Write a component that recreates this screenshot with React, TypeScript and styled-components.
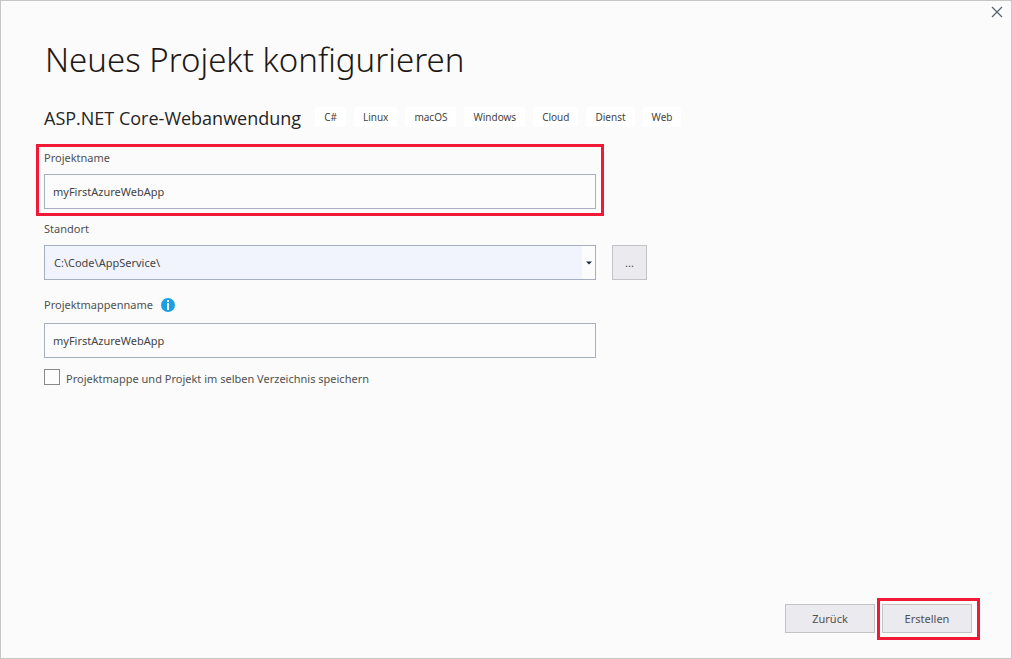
import React, { useState } from "react";
import styled, { createGlobalStyle } from "styled-components";

const GlobalStyle = createGlobalStyle`
  *, *::before, *::after { box-sizing: border-box; }
  body {
    margin: 0;
    background: #fbfbfb;
    color: #505050;
    font-family: "Noto Sans", "Open Sans", sans-serif;
    font-size: 11px;
    line-height: 16px;
  }
  button, input { font: inherit; color: inherit; }
`;

const Dialog = styled.main`
  display: flex;
  flex-direction: column;
  min-height: 100vh;
  border: 1px solid #c6c6c6;
  background: #fbfbfb;
`;

const TitleBar = styled.div`
  display: flex;
  justify-content: flex-end;
  padding: 3px 6px 0 0;
`;

const CloseButton = styled.button`
  display: flex;
  align-items: center;
  justify-content: center;
  width: 16px;
  height: 16px;
  padding: 0;
  border: 0;
  background: none;
  color: #5b6478;
`;

const Title = styled.h1`
  margin: 0;
  padding: 18px 44px 0;
  color: #1e1815;
  font-size: 33px;
  font-weight: 300;
  line-height: 44px;
`;

const TemplateRow = styled.div`
  display: flex;
  flex-wrap: wrap;
  align-items: center;
  gap: 14px;
  padding: 22px 43px 12px;
`;

const TemplateName = styled.h2`
  margin: 0;
  color: #252525;
  font-family: "Open Sans", "Noto Sans", sans-serif;
  font-size: 18px;
  font-weight: 400;
  line-height: 28px;
`;

const Tags = styled.ul`
  display: flex;
  flex-wrap: wrap;
  gap: 8px;
  margin: 0 0 2px;
  padding: 0;
  list-style: none;
`;

const Tag = styled.li`
  padding: 2px 9px;
  border-radius: 3px;
  background: #fff;
  color: #444;
  font-size: 10px;
`;

const Form = styled.form`
  display: flex;
  flex: 1;
  flex-direction: column;
`;

const Fields = styled.div`
  display: flex;
  flex-direction: column;
  padding: 0 35px;
`;

const Field = styled.div<{ $marked?: boolean }>`
  display: flex;
  flex-direction: column;
  gap: 8px;
  width: 100%;
  max-width: 568px;
  padding: 3px 5px 4px;
  border: 3px solid ${(p) => (p.$marked ? "#f11a36" : "transparent")};
`;

const LocationRow = styled.div`
  display: flex;
  align-items: flex-end;
  gap: 8px;
  margin-top: -1px;
`;

const LabelRow = styled.div`
  display: flex;
  align-items: center;
  gap: 8px;
  min-height: 16px;
`;

const SolutionField = styled(Field)`
  padding-top: 5px;

  ${LabelRow} { min-height: 20px; }
`;

const TextInput = styled.input`
  width: 100%;
  height: 35px;
  padding: 0 8px;
  border: 1px solid #a5afbf;
  border-radius: 0;
  background: #fcfcfc;
  color: #444;
  outline: 0;
`;

const Combo = styled.div`
  display: flex;
  height: 35px;
  border: 1px solid #a5afbf;
  background: #fcfcfc;
`;

const ComboInput = styled.input`
  flex: 1;
  min-width: 0;
  padding: 0 9px;
  border: 0;
  background: #f1f4fd;
  color: #444;
  outline: 0;
`;

const ComboToggle = styled.button`
  display: flex;
  align-items: center;
  justify-content: center;
  width: 13px;
  padding: 0;
  border: 0;
  background: none;
  color: #1e2940;
`;

const Button = styled.button`
  width: 90px;
  height: 29px;
  padding: 0;
  border: 1px solid #c3c3c5;
  background: #ebeaef;
  color: #505050;
`;

const BrowseButton = styled(Button)`
  width: 35px;
  height: 35px;
  margin-bottom: 7px;
`;

const CheckLabel = styled.label`
  display: flex;
  align-items: flex-start;
  gap: 6px;
  padding: 4px 8px;
  line-height: 20px;
`;

const CheckBox = styled.input`
  appearance: none;
  width: 16px;
  height: 16px;
  margin: 0;
  border: 1px solid #8a8a8a;
  background: #fdfdfd;

  &:checked { background: #5b6478; }
`;

const Footer = styled.footer`
  display: flex;
  align-items: baseline;
  justify-content: flex-end;
  gap: 2px;
  margin-top: auto;
  padding: 18px 31px;
`;

const ActionFrame = styled.div`
  padding: 3px 5px 4px 2px;
  border: 3px solid #f11a36;

  ${Button} { display: block; }
`;

const tags = ["C#", "Linux", "macOS", "Windows", "Cloud", "Dienst", "Web"];

function InfoIcon() {
  return (
    <svg width="14" height="14" viewBox="0 0 14 14" role="img" aria-label="Info">
      <circle cx="7" cy="7" r="7" fill="#1ba1e2" />
      <path d="M6 2h2v2H6zM6 5h2v7H6z" fill="#fff" />
    </svg>
  );
}

export default function App() {
  const [project, setProject] = useState("myFirstAzureWebApp");
  const [location, setLocation] = useState("C:\\Code\\AppService\\");
  const [solution, setSolution] = useState("myFirstAzureWebApp");

  return (
    <Dialog>
      <GlobalStyle />
      <TitleBar>
        <CloseButton type="button" aria-label="Schließen">
          <svg width="12" height="12" viewBox="0 0 12 12">
            <path d="M1 1l10 10M11 1l-10 10" stroke="currentColor" strokeWidth="1.3" />
          </svg>
        </CloseButton>
      </TitleBar>
      <Title>Neues Projekt konfigurieren</Title>
      <TemplateRow>
        <TemplateName>ASP.NET Core-Webanwendung</TemplateName>
        <Tags>
          {tags.map((tag) => (
            <Tag key={tag}>{tag}</Tag>
          ))}
        </Tags>
      </TemplateRow>
      <Form onSubmit={(e) => e.preventDefault()}>
        <Fields>
          <Field $marked>
            <LabelRow>
              <label htmlFor="project">Projektname</label>
            </LabelRow>
            <TextInput id="project" value={project} onChange={(e) => setProject(e.target.value)} />
          </Field>
          <LocationRow>
            <Field>
              <LabelRow>
                <label htmlFor="location">Standort</label>
              </LabelRow>
              <Combo>
                <ComboInput id="location" value={location} onChange={(e) => setLocation(e.target.value)} />
                <ComboToggle type="button" aria-label="Zuletzt verwendete Standorte">
                  <svg width="6" height="4" viewBox="0 0 6 4">
                    <path d="M0 0.5h6L3 3.5z" fill="currentColor" />
                  </svg>
                </ComboToggle>
              </Combo>
            </Field>
            <BrowseButton type="button" aria-label="Durchsuchen">...</BrowseButton>
          </LocationRow>
          <SolutionField>
            <LabelRow>
              <label htmlFor="solution">Projektmappenname</label>
              <InfoIcon />
            </LabelRow>
            <TextInput id="solution" value={solution} onChange={(e) => setSolution(e.target.value)} />
          </SolutionField>
          <CheckLabel>
            <CheckBox type="checkbox" />
            Projektmappe und Projekt im selben Verzeichnis speichern
          </CheckLabel>
        </Fields>
        <Footer>
          <Button type="button">Zurück</Button>
          <ActionFrame>
            <Button type="submit">Erstellen</Button>
          </ActionFrame>
        </Footer>
      </Form>
    </Dialog>
  );
}
